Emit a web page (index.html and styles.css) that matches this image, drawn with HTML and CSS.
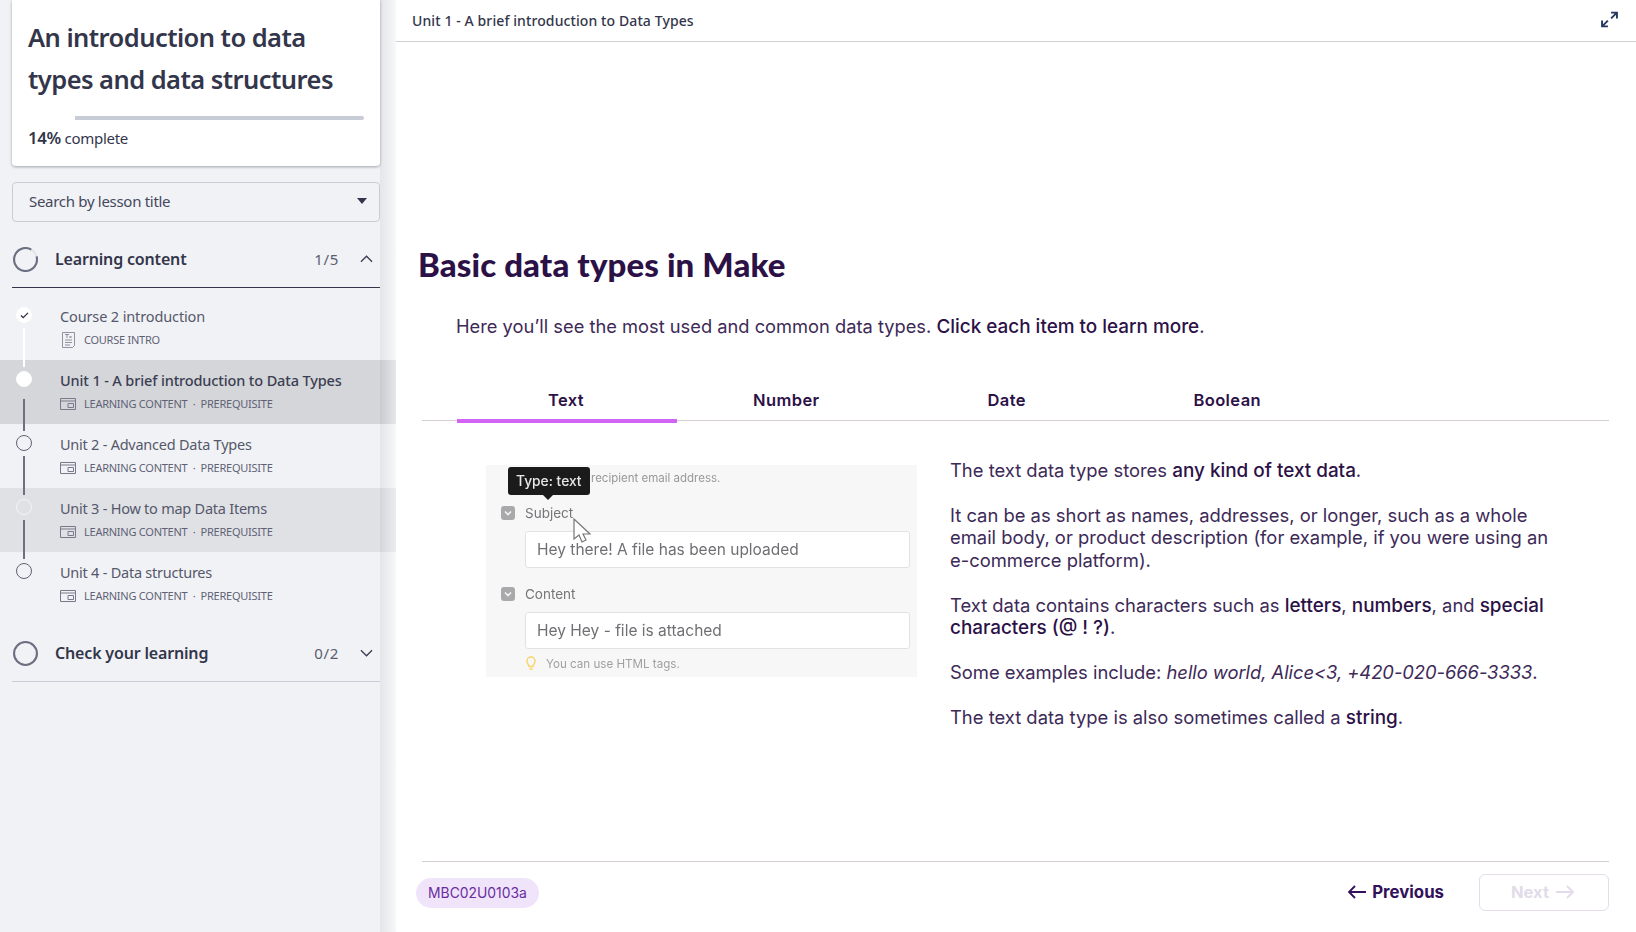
FILE: index.html
```html
<!DOCTYPE html>
<html lang="en">
<head>
    <meta charset="UTF-8">
    <meta name="viewport" content="width=device-width, initial-scale=1.0">
    <title>Basic data types in Make</title>
    <link rel="stylesheet" href="styles.css">
</head>
<body>
    <svg class="defs">
        <symbol id="lesson" viewBox="0 0 16 12"><path d="M.5.5h15v11H.5zM.5 3h15M8 5.500h5.500v4H8z" fill="none" stroke="currentColor"/></symbol>
    </svg>
    <aside class="sidebar">
        <div class="course-card">
            <h1>An introduction to data types and data structures</h1>
            <div class="progress"><span class="progress-done"></span><span class="progress-rest"></span></div>
            <p class="complete"><b>14%</b> complete</p>
        </div>

        <div class="search">Search by lesson title<span class="caret"></span></div>

        <div class="section-head open">
            <svg class="ring" viewBox="0 0 24 24"><circle cx="12" cy="12" r="11" fill="none" stroke="#e3e4e8" stroke-width="2"/><path d="M17.500 2.500A11 11 0 1 0 22.600 9" fill="none" stroke="#6b6f80" stroke-width="2"/></svg>
            <span class="section-title">Learning content</span>
            <span class="count">1/5</span>
            <svg class="chev" viewBox="0 0 14 8"><path d="M1 7l6-6 6 6" fill="none" stroke="#3a3d52" stroke-width="1.400"/></svg>
        </div>

        <ul class="lessons">
            <li class="lesson done">
                <span class="dot"><svg viewBox="0 0 10 8"><path d="M1 4l2.500 2.500L9 1" fill="none" stroke="#2c2e42" stroke-width="1.500"/></svg></span>
                <div class="lesson-title">Course 2 introduction</div>
                <div class="lesson-meta">
                    <svg class="doc" viewBox="0 0 13 16"><path d="M.5.5h12v13l-2 2h-10zM3 8h7M3 10.500h7M3 13h5" fill="none" stroke="currentColor" stroke-width=".8"/><path d="M3 2.500h4M5 2.500v3.500M7.500 4l2 2M9.500 4l-2 2" fill="none" stroke="currentColor" stroke-width=".8"/></svg>
                    COURSE INTRO
                </div>
            </li>
            <li class="lesson current">
                <span class="dot"></span>
                <div class="lesson-title">Unit 1 - A brief introduction to Data Types</div>
                <div class="lesson-meta"><svg class="scr"><use href="#lesson"/></svg>LEARNING CONTENT&nbsp; · &nbsp;PREREQUISITE</div>
            </li>
            <li class="lesson">
                <span class="dot"></span>
                <div class="lesson-title">Unit 2 - Advanced Data Types</div>
                <div class="lesson-meta"><svg class="scr"><use href="#lesson"/></svg>LEARNING CONTENT&nbsp; · &nbsp;PREREQUISITE</div>
            </li>
            <li class="lesson hover">
                <span class="dot"></span>
                <div class="lesson-title">Unit 3 - How to map Data Items</div>
                <div class="lesson-meta"><svg class="scr"><use href="#lesson"/></svg>LEARNING CONTENT&nbsp; · &nbsp;PREREQUISITE</div>
            </li>
            <li class="lesson last">
                <span class="dot"></span>
                <div class="lesson-title">Unit 4 - Data structures</div>
                <div class="lesson-meta"><svg class="scr"><use href="#lesson"/></svg>LEARNING CONTENT&nbsp; · &nbsp;PREREQUISITE</div>
            </li>
        </ul>

        <div class="section-head closed">
            <svg class="ring" viewBox="0 0 24 24"><circle cx="12" cy="12" r="11" fill="none" stroke="#6b6f80" stroke-width="2"/></svg>
            <span class="section-title">Check your learning</span>
            <span class="count">0/2</span>
            <svg class="chev" viewBox="0 0 14 8"><path d="M1 1l6 6 6-6" fill="none" stroke="#3a3d52" stroke-width="1.400"/></svg>
        </div>
    </aside>

    <main class="main">
        <header class="topbar">
            <span>Unit 1 - A brief introduction to Data Types</span>
            <svg class="expand" viewBox="0 0 16 16"><path d="M9.500 1.500H15V7M15 1.500L9.500 7M6.500 9L1 14.500M1 9v5.500h5.500" fill="none" stroke="#26375f" stroke-width="1.800"/></svg>
        </header>

        <section class="content">
            <h2>Basic data types in Make</h2>
            <p class="intro">Here you’ll see the most used and common data types. <b>Click each item to learn more</b>.</p>

            <div class="tabs">
                <div class="tab active">Text</div>
                <div class="tab">Number</div>
                <div class="tab">Date</div>
                <div class="tab">Boolean</div>
            </div>

            <div class="panel">
                <div class="shot">
                    <div class="shot-inner">
                        <div class="shot-hint">recipient email address.</div>
                        <div class="shot-label"><span class="box"><svg viewBox="0 0 14 14"><path d="M4 5.500l3 3 3-3" fill="none" stroke="#f4f4f4" stroke-width="1.600"/></svg></span>Subject</div>
                        <div class="shot-input">Hey there! A file has been uploaded</div>
                        <div class="shot-label second"><span class="box"><svg viewBox="0 0 14 14"><path d="M4 5.500l3 3 3-3" fill="none" stroke="#f4f4f4" stroke-width="1.600"/></svg></span>Content</div>
                        <div class="shot-input">Hey Hey - file is attached</div>
                        <div class="shot-tip">
                            <svg class="bulb" viewBox="0 0 10 15"><path d="M3 10.500C2.500 8.500 1 7.500 1 5a4 4 0 0 1 8 0c0 2.500-1.500 3.500-2 5.500zM3.500 13h3" fill="none" stroke="#fbd36b" stroke-width="1.500"/></svg>
                            You can use HTML tags.
                        </div>
                    </div>
                    <div class="shot-tooltip">Type: text</div>
                    <svg class="cursor" viewBox="0 0 18 26"><path d="M1 1v20l5-4 3 7 4-2-3-6h7z" fill="#fff" stroke="#777" stroke-width="1.200"/></svg>
                </div>
                <div class="copy">
                    <p>The text data type stores <b>any kind of text data</b>.</p>
                    <p>It can be as short as names, addresses, or longer, such as a whole email body, or product description (for example, if you were using an e-commerce platform).</p>
                    <p>Text data contains characters such as <b>letters</b>, <b>numbers</b>, and <b>special</b> <b>characters (@ ! ?)</b>.</p>
                    <p>Some examples include: <i>hello world, Alice&lt;3, +420-020-666-3333</i>.</p>
                    <p>The text data type is also sometimes called a <b>string</b>.</p>
                </div>
            </div>
        </section>

        <footer class="footer">
            <span class="pill">MBC02U0103a</span>
            <div class="nav">
                <a class="prev"><svg viewBox="0 0 19 14"><path d="M19 7H2M8 1L2 7l6 6" fill="none" stroke="currentColor" stroke-width="1.800"/></svg>Previous</a>
                <a class="next">Next<svg viewBox="0 0 19 14"><path d="M0 7h17M11 1l6 6-6 6" fill="none" stroke="currentColor" stroke-width="1.800"/></svg></a>
            </div>
        </footer>
    </main>
</body>
</html>
```
FILE: styles.css
```css
* {
    box-sizing: border-box;
}
body {
    margin: 0;
    height: 932px;
    display: flex;
    overflow: hidden;
    font-family: Inter, sans-serif;
    color: #2c1147;
    background-color: #fff;
}
.defs {
    display: none;
}

/* sidebar */
.sidebar {
    width: 396px;
    flex-shrink: 0;
    background-color: #f1f2f5;
    font-family: "Noto Sans", sans-serif;
    color: #33364b;
    position: relative;
}
/* soft shaded strip down the right edge */
.sidebar::after {
    content: "";
    position: absolute;
    top: 0;
    right: 0;
    bottom: 0;
    width: 16px;
    background: linear-gradient(to right, rgba(0, 0, 0, 0.05), rgba(255, 255, 255, 0.4));
}
.course-card {
    margin: 0 16px 0 12px;
    height: 166px;
    padding: 16px 16px 0;
    background-color: #fff;
    border-radius: 0 0 4px 4px;
    box-shadow: 0 1px 3px rgba(40, 44, 70, 0.4);
}
.course-card h1 {
    margin: 0;
    font-size: 25.500px;
    line-height: 42px;
    font-weight: 600;
    letter-spacing: -0.55px;
}
.progress {
    display: flex;
    height: 4px;
    margin-top: 16px;
}
.progress-done {
    width: 47px;
    background-color: #fff;
}
.progress-rest {
    flex: 1;
    background-color: #c8ccd7;
    border-radius: 0 2px 2px 0;
}
.complete {
    margin: 7px 0 0;
    font-size: 15px;
    line-height: 22px;
    letter-spacing: -0.3px;
}
.complete b {
    font-size: 16.800px;
    font-weight: 600;
}
.search {
    margin: 16px 16px 0 12px;
    height: 40px;
    padding: 0 12px 2px 16px;
    display: flex;
    align-items: center;
    justify-content: space-between;
    border: 1px solid #c8ccd7;
    border-radius: 4px;
    font-size: 15px;
    letter-spacing: -0.3px;
    color: #45485c;
}
.caret {
    width: 0;
    height: 0;
    border-left: 5px solid transparent;
    border-right: 5px solid transparent;
    border-top: 6px solid #33364b;
}
.section-head {
    margin: 0 16px 0 12px;
    height: 66px;
    padding-top: 9px;
    display: flex;
    align-items: center;
}
.section-head.open {
    border-bottom: 1px solid #33364b;
}
.section-head.closed {
    border-bottom: 1px solid #c8ccd7;
}
.ring {
    width: 25px;
    height: 25px;
    margin-left: 1px;
    flex-shrink: 0;
}
.section-title {
    margin-left: 17px;
    flex: 1;
    font-size: 16px;
    font-weight: 600;
    letter-spacing: -0.17px;
}
.count {
    font-size: 15px;
    color: #5a5d70;
    letter-spacing: 0.7px;
}
.chev {
    width: 13px;
    height: 8px;
    margin: 0 7px 0 21px;
}
.lessons {
    list-style: none;
    margin: 8px 0 0;
    padding: 0;
}
.lesson {
    height: 64px;
    padding: 9px 0 0 60px;
    position: relative;
}
.lesson.current {
    background-color: #d5d6da;
}
.lesson.current .lesson-title {
    font-weight: 500;
    color: #3b3e52;
    letter-spacing: -0.13px;
}
.lesson.done .lesson-title {
    letter-spacing: -0.13px;
}
.lesson.hover {
    background-color: #e0e1e5;
}
.dot {
    position: absolute;
    left: 16px;
    top: 11px;
    width: 16px;
    height: 16px;
    border: 1px solid #5f6275;
    border-radius: 50%;
}
.lesson.done .dot,
.lesson.current .dot {
    background-color: #fff;
    border-color: #fff;
}
.lesson.hover .dot {
    border-color: #f4f5f7;
}
.dot svg {
    display: block;
    width: 9px;
    height: 7px;
    margin: 3.500px 0 0 2.500px;
}
.lesson::after {
    content: "";
    position: absolute;
    left: 23px;
    top: 32px;
    width: 2px;
    height: 39px;
    background-color: #6b6e85;
    z-index: 1;
}
.lesson.done::after {
    background-color: #fff;
}
.lesson.current::after {
    top: 39px;
    height: 32px;
}
.lesson.last::after {
    display: none;
}
.lesson-title {
    font-size: 14.500px;
    line-height: 22px;
    letter-spacing: -0.24px;
    color: #55586b;
}
.lesson-meta {
    margin-top: 5px;
    display: flex;
    align-items: center;
    font-size: 11px;
    line-height: 16px;
    letter-spacing: -0.25px;
    color: #5f6275;
}
.scr {
    width: 16px;
    height: 12px;
    margin-right: 8px;
    color: #777a8c;
}
.doc {
    width: 13px;
    height: 16px;
    margin: 0 9px 0 2px;
    color: #777a8c;
}

/* main column */
.main {
    flex: 1;
    display: flex;
    flex-direction: column;
    min-width: 0;
}
.topbar {
    height: 42px;
    padding: 0 18px 0 16px;
    display: flex;
    align-items: center;
    justify-content: space-between;
    border-bottom: 1px solid #cfd0d4;
    font-family: "Noto Sans", sans-serif;
    font-size: 14px;
    font-weight: 500;
    letter-spacing: 0.1px;
    color: #33364b;
}
.expand {
    width: 17px;
    height: 17px;
    margin-top: -2px;
}
.content {
    flex: 1;
    padding: 200px 27px 0 26px;
}
.content h2 {
    margin: 0 0 0 -4px;
    font-family: Lato, sans-serif;
    font-size: 33px;
    line-height: 44px;
    font-weight: 900;
    letter-spacing: 0.1px;
}
.intro {
    margin: 27px 0 0 34px;
    font-size: 18.300px;
    line-height: 26px;
    color: #3d2a57;
}
.intro b,
.copy b {
    font-size: 18.900px;
    line-height: 1;
    font-weight: 500;
    color: #2c1147;
}
.tabs {
    display: flex;
    margin-top: 37px;
    padding-left: 35px;
    border-bottom: 1px solid #d5cfd2;
}
.tab {
    width: 220.500px;
    height: 45px;
    padding: 14px 2px 0 0;
    margin-bottom: -1px;
    text-align: center;
    font-size: 16.500px;
    line-height: 20px;
    font-weight: 600;
    letter-spacing: 0.4px;
}
.tab.active {
    width: 220px;
    height: 47px;
    margin-bottom: -3px;
    border-bottom: 4px solid #d264f5;
}
.panel {
    display: flex;
    margin: 44px 0 0 64px;
}
.shot {
    width: 431px;
    height: 212px;
    flex-shrink: 0;
    position: relative;
    background-color: #f7f7f7;
}
.shot-inner {
    padding: 6px 7px 0 15px;
    filter: blur(0.75px);
    font-size: 13.500px;
    color: #757578;
}
.shot-hint {
    margin-left: 90px;
    font-size: 11.500px;
    line-height: 14px;
    color: #98989b;
}
.shot-label {
    display: flex;
    align-items: center;
    margin-top: 18px;
    line-height: 20px;
}
.shot-label.second {
    margin-top: 16px;
}
.box {
    width: 14px;
    height: 14px;
    margin-right: 10px;
    border-radius: 3px;
    background-color: #a9a9ab;
}
.box svg {
    display: block;
}
.shot-input {
    margin: 8px 0 0 24px;
    height: 37px;
    padding-left: 11px;
    display: flex;
    align-items: center;
    background-color: #fff;
    border: 1px solid #e2e2e4;
    border-radius: 3px;
    font-size: 15.500px;
    color: #707074;
}
.shot-tip {
    display: flex;
    align-items: center;
    margin: 7px 0 0 27px;
    font-size: 11.600px;
    line-height: 14px;
    color: #a0a0a3;
}
.bulb {
    width: 10px;
    height: 15px;
    margin: 0 10px 0 -2px;
}
.shot-tooltip {
    position: absolute;
    left: 22px;
    top: 2px;
    padding: 0 8px;
    line-height: 28px;
    background-color: #1b1b1b;
    border-radius: 3px;
    color: #e8e8e8;
    font-size: 13.800px;
    font-weight: 500;
    filter: blur(0.4px);
}
.shot-tooltip::after {
    content: "";
    position: absolute;
    left: 35px;
    bottom: -5px;
    border-left: 5px solid transparent;
    border-right: 5px solid transparent;
    border-top: 5px solid #1b1b1b;
}
.cursor {
    position: absolute;
    left: 87px;
    top: 53px;
    width: 18px;
    height: 26px;
}
.copy {
    width: 606px;
    margin: -6px 0 0 33px;
    font-size: 18.400px;
    line-height: 22.450px;
    color: #3d2a57;
}
.copy p {
    margin: 0 0 22.450px;
}
.copy i {
    letter-spacing: -0.06px;
}
.footer {
    height: 71px;
    margin: 0 27px 0 26px;
    display: flex;
    align-items: flex-start;
    justify-content: space-between;
    border-top: 1px solid #d5cfd2;
}
.pill {
    margin: 16px 0 0 -6px;
    height: 30px;
    padding: 0 12px 1px 12px;
    display: flex;
    align-items: center;
    background-color: #f0e4fb;
    border-radius: 15px;
    font-size: 13.900px;
    color: #6a2ca0;
}
.nav {
    display: flex;
    align-items: center;
    margin-top: 12px;
}
.prev,
.next {
    display: flex;
    align-items: center;
    font-size: 16.500px;
    font-weight: 700;
    padding-bottom: 1px;
}
.prev {
    color: #32105a;
    margin-right: 35px;
    font-size: 16.800px;
}
.prev svg {
    width: 19px;
    height: 14px;
    margin-right: 6px;
}
.next {
    width: 130px;
    height: 37px;
    padding-right: 2px;
    justify-content: center;
    border: 1px solid #e4dce9;
    border-radius: 6px;
    color: #e2dbe9;
}
.next svg {
    width: 19px;
    height: 14px;
    margin-left: 7px;
}
```
